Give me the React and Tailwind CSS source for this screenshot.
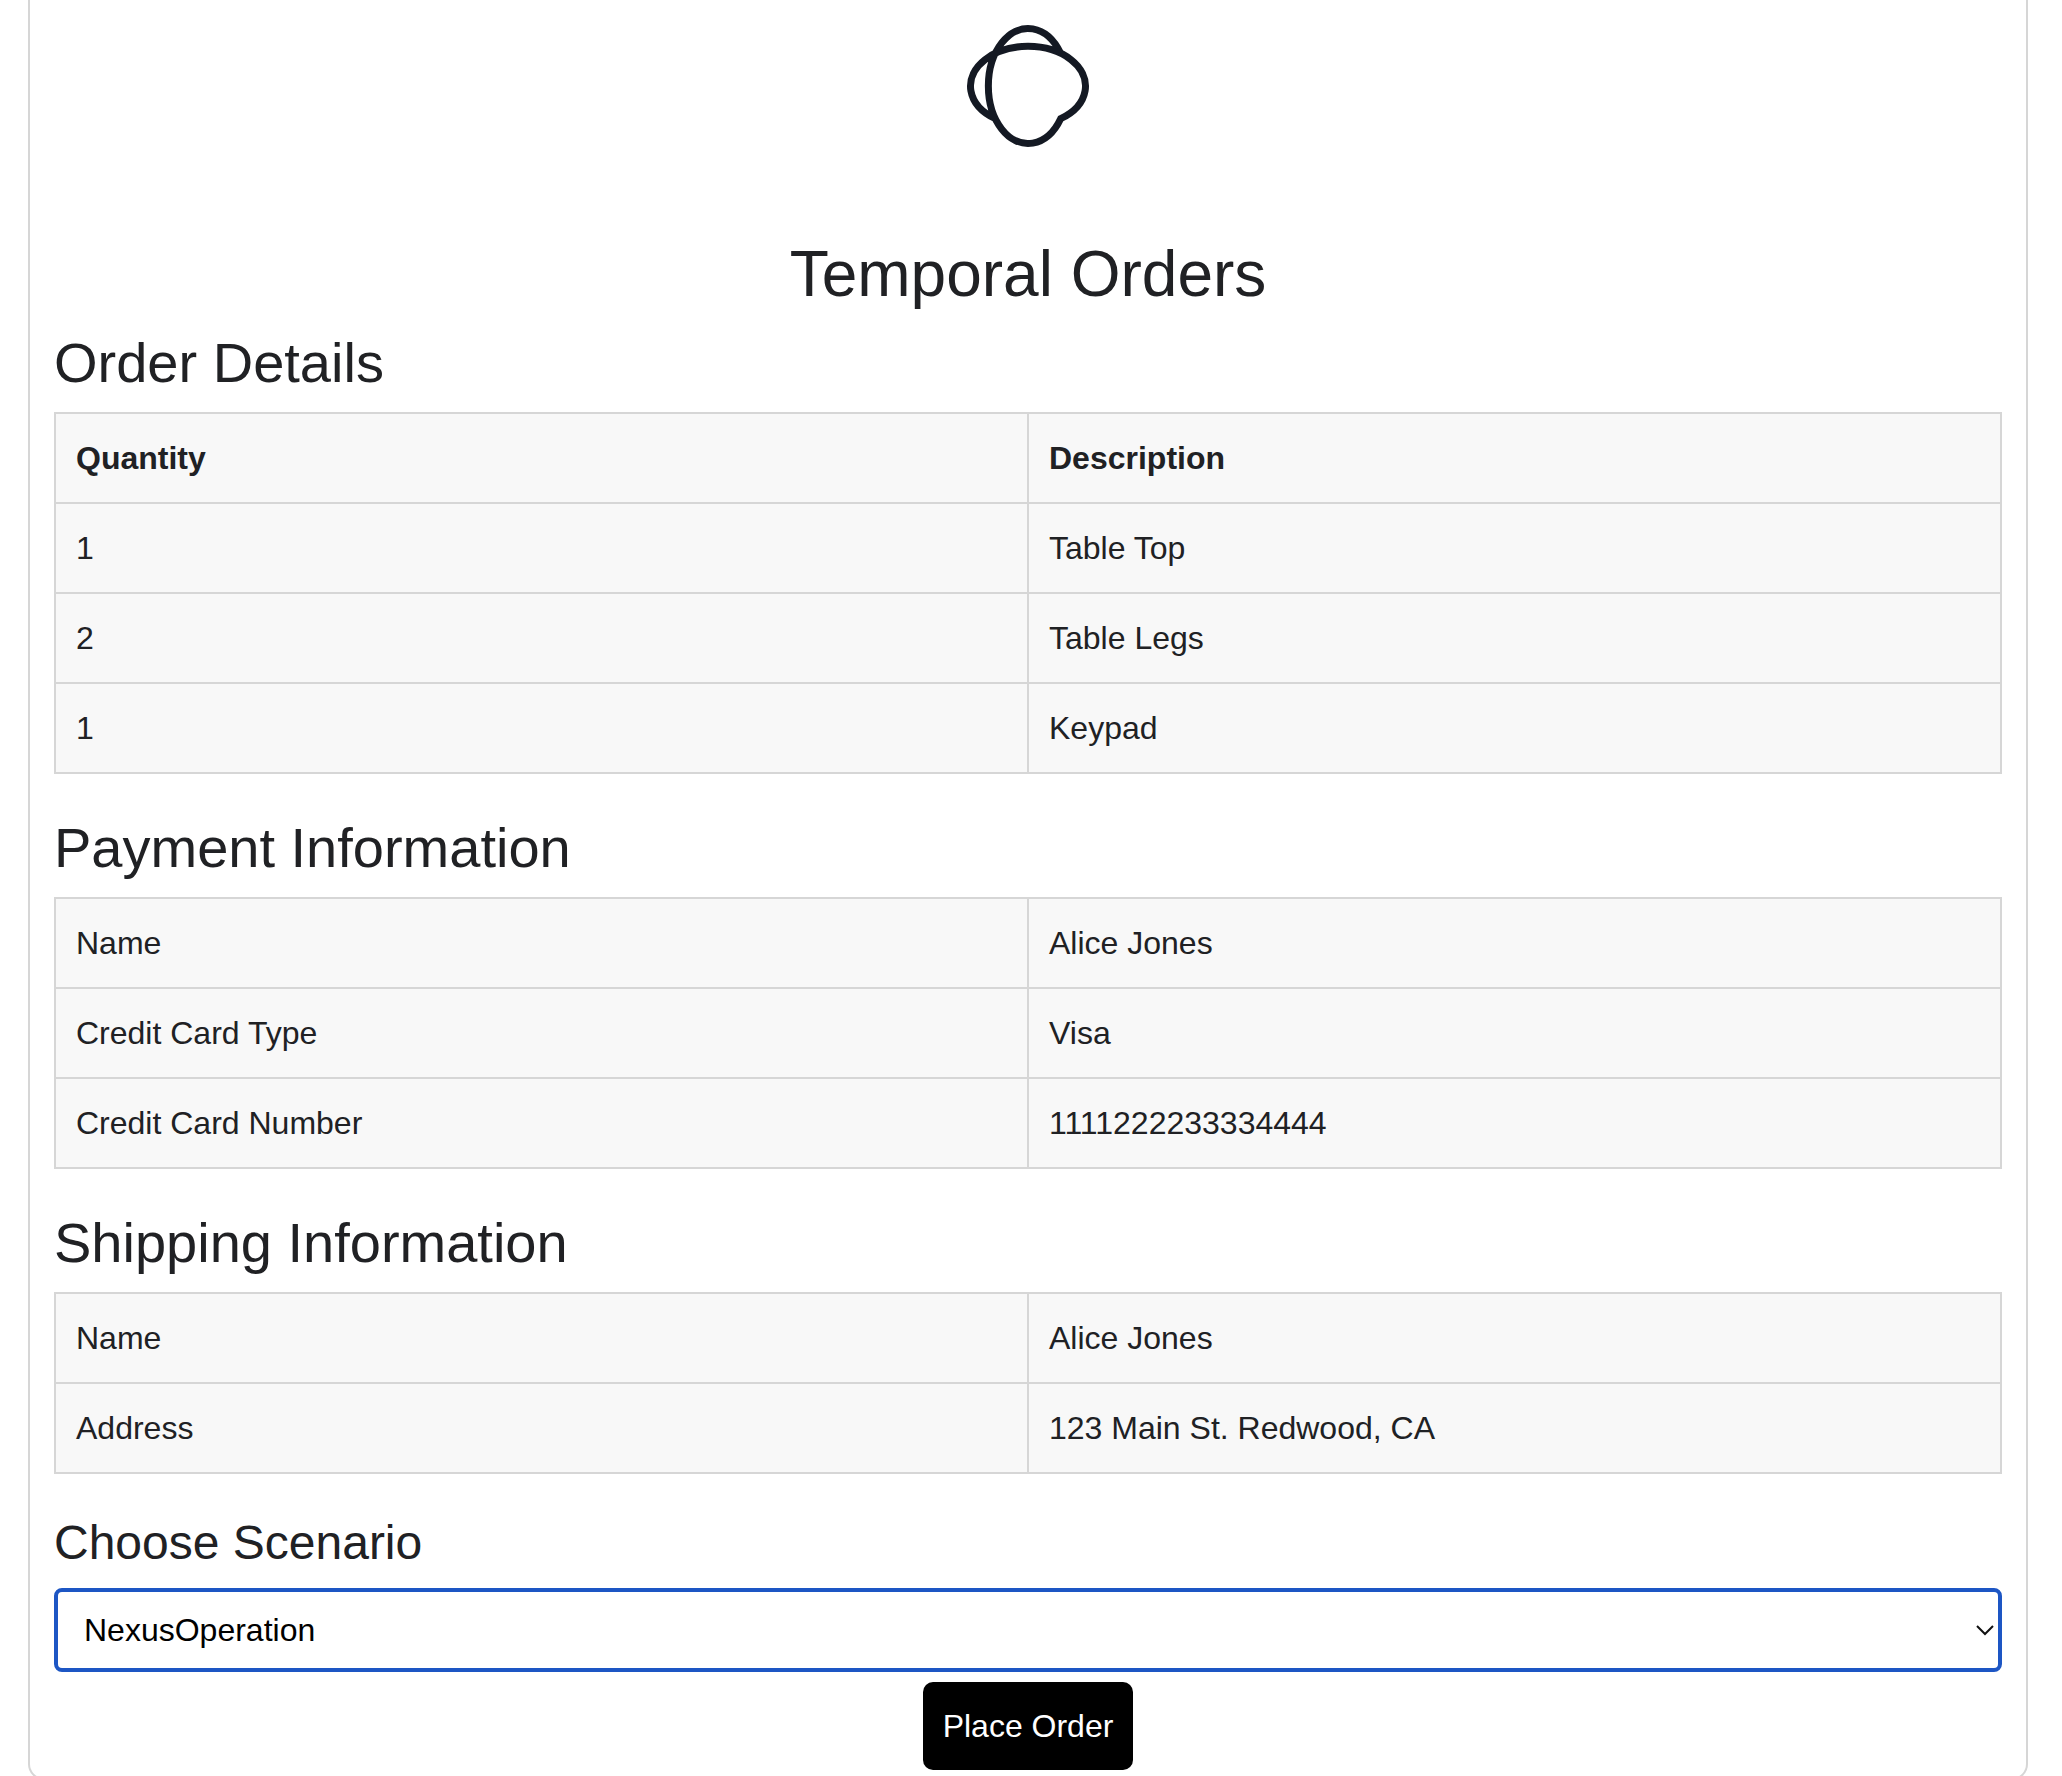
const orderItems = [
  { quantity: "1", description: "Table Top" },
  { quantity: "2", description: "Table Legs" },
  { quantity: "1", description: "Keypad" },
];

const payment = [
  ["Name", "Alice Jones"],
  ["Credit Card Type", "Visa"],
  ["Credit Card Number", "1111222233334444"],
];

const shipping = [
  ["Name", "Alice Jones"],
  ["Address", "123 Main St. Redwood, CA"],
];

const scenarios = ["NexusOperation", "HappyPath", "AdvancedVisibility"];

const tableClass =
  "mb-10 w-full table-fixed border-separate border-spacing-0 border-t-2 border-l-2 border-[#d6d6d6] bg-[#f8f8f8] text-left";
const cellClass = "border-r-2 border-b-2 border-[#d6d6d6] p-5";

function Logo() {
  return (
    <svg
      viewBox="78 72 372 372"
      className="mx-auto mb-[87px] block size-[124px]"
      fill="none"
      stroke="#141923"
      strokeWidth="21"
      role="img"
      aria-label="Temporal"
    >
      <path d="M166 356A172.5 119 0 1 1 362 356A119 172.5 0 1 1 362 160" />
    </svg>
  );
}

function SectionTitle({ id, children }) {
  return (
    <h2 id={id} className="mb-4 text-[56px] leading-[67px]">
      {children}
    </h2>
  );
}

function DetailTable({ rows, labelledBy }) {
  return (
    <table aria-labelledby={labelledBy} className={tableClass}>
      <tbody>
        {rows.map(([label, value]) => (
          <tr key={label}>
            <th scope="row" className={`${cellClass} font-normal`}>
              {label}
            </th>
            <td className={cellClass}>{value}</td>
          </tr>
        ))}
      </tbody>
    </table>
  );
}

export default function App() {
  return (
    <div className="h-screen overflow-y-auto bg-white pr-[34px] pl-7 font-['Liberation_Sans',Arial,sans-serif] text-[32px] leading-[48px] text-[#202124] [scrollbar-width:none]">
      <main className="rounded-b-2xl border-x-2 border-b-2 border-[#d6d6d6] px-6 pt-6 pb-2">
        <Logo />
        <h1 className="mb-4 text-center text-[64px] leading-[78px]">
          Temporal Orders
        </h1>

        <SectionTitle id="order-title">Order Details</SectionTitle>
        <table aria-labelledby="order-title" className={tableClass}>
          <thead>
            <tr>
              <th scope="col" className={`${cellClass} font-bold`}>
                Quantity
              </th>
              <th scope="col" className={`${cellClass} font-bold`}>
                Description
              </th>
            </tr>
          </thead>
          <tbody>
            {orderItems.map((item) => (
              <tr key={item.description}>
                <td className={cellClass}>{item.quantity}</td>
                <td className={cellClass}>{item.description}</td>
              </tr>
            ))}
          </tbody>
        </table>

        <SectionTitle id="payment-title">Payment Information</SectionTitle>
        <DetailTable rows={payment} labelledBy="payment-title" />

        <SectionTitle id="shipping-title">Shipping Information</SectionTitle>
        <DetailTable rows={shipping} labelledBy="shipping-title" />

        <form onSubmit={(event) => event.preventDefault()}>
          <label
            htmlFor="scenario"
            className="mb-4 block text-[48px] leading-[58px]"
          >
            Choose Scenario
          </label>
          <div className="relative mb-2.5">
            <select
              id="scenario"
              defaultValue="NexusOperation"
              className="block w-full appearance-none rounded-lg border-4 border-[#1d56c4] bg-white py-3.5 pr-10 pl-[26px] text-black outline-none"
            >
              {scenarios.map((name) => (
                <option key={name}>{name}</option>
              ))}
            </select>
            <svg
              viewBox="0 0 18 12"
              className="pointer-events-none absolute inset-y-0 right-2 my-auto h-3 w-[18px]"
              fill="none"
              stroke="#111"
              strokeWidth="2"
              aria-hidden="true"
            >
              <path d="M1 2L9 10L17 2" />
            </svg>
          </div>
          <button
            type="submit"
            className="mx-auto block rounded-[10px] bg-black p-5 text-white"
          >
            Place Order
          </button>
        </form>
      </main>
    </div>
  );
}
